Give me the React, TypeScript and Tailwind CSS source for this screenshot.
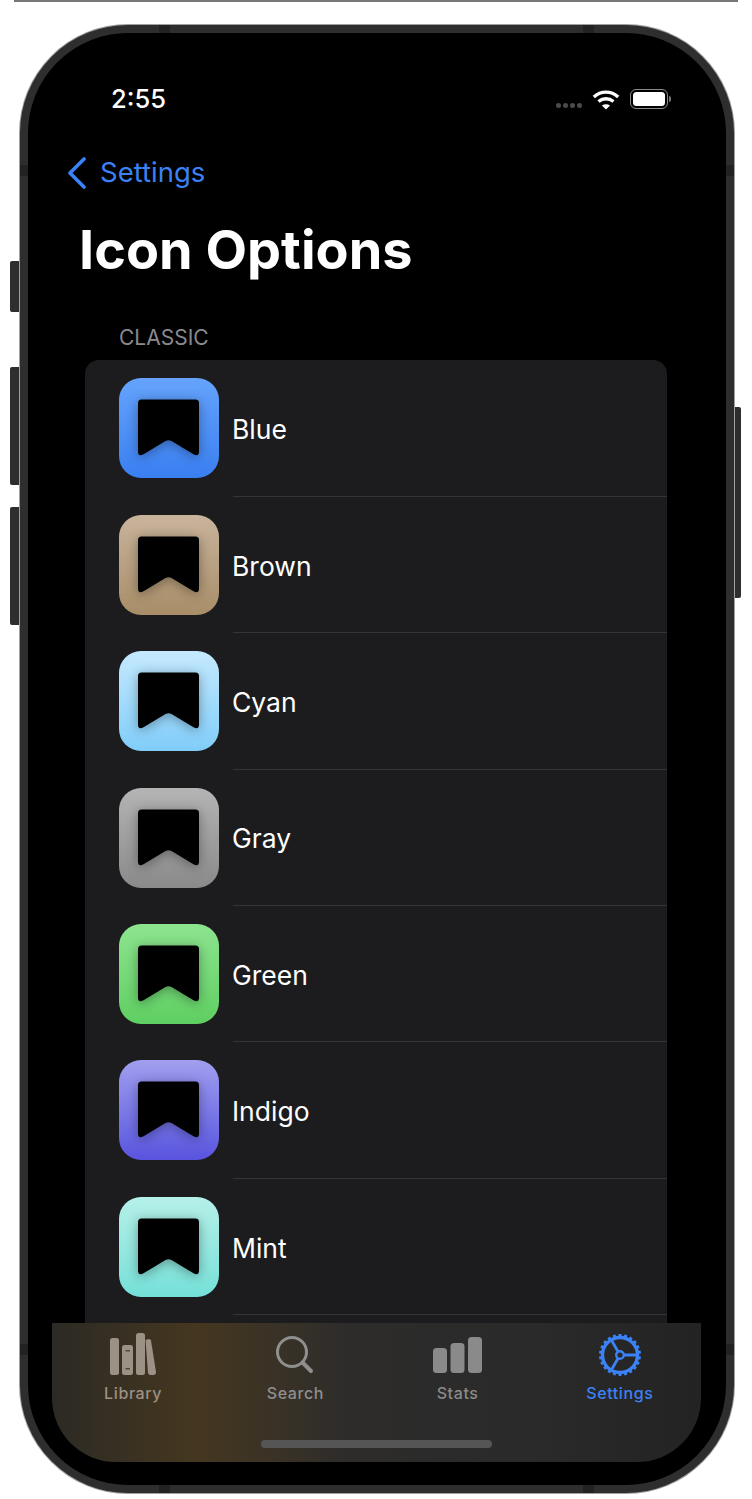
const icons = [
  { name: "Blue", gradient: "bg-gradient-to-b from-[#65a3fc] to-[#3a7ff1]" },
  { name: "Brown", gradient: "bg-gradient-to-b from-[#c9b49c] to-[#a88d68]" },
  { name: "Cyan", gradient: "bg-gradient-to-b from-[#c4e9fe] to-[#80cdf9]" },
  { name: "Gray", gradient: "bg-gradient-to-b from-[#b4b4b4] to-[#8a8a8a]" },
  { name: "Green", gradient: "bg-gradient-to-b from-[#8de48f] to-[#5fcf62]" },
  { name: "Indigo", gradient: "bg-gradient-to-b from-[#a29eef] to-[#5a53de]" },
  { name: "Mint", gradient: "bg-gradient-to-b from-[#b5f0e9] to-[#74e0d8]" },
];

const Bookmark = () => (
  <svg viewBox="0 0 100 100" className="w-[100px] h-[100px] drop-shadow-[0_2px_6px_rgba(0,0,0,0.35)]">
    <path
      d="M22.500 21.500 Q19 21.500 19 25 L19 73.500 Q19 79 24.500 76.300 L46.500 63 Q49.500 61.500 52.500 63 L74.500 76.300 Q80 79 80 73.500 L80 25 Q80 21.500 76.500 21.500 Z"
      fill="#000"
    />
  </svg>
);

const Wifi = () => (
  <svg viewBox="0 0 28 21" className="w-[28px] h-[21px]" fill="none" stroke="#fff" strokeWidth="3.4">
    <path d="M1.800 8 C9 1.500 19 1.500 26.200 8" />
    <path d="M6.500 12.500 C11 8.800 17 8.800 21.500 12.500" />
    <path d="M14 20.500 L9.900 16.500 C12.300 14.700 15.700 14.700 18.100 16.500 Z" fill="#fff" stroke="none" />
  </svg>
);

const Battery = () => (
  <div className="flex items-center">
    <div className="w-[38px] h-[20px] rounded-[6px] border border-[#8a8a8a] p-[2px]">
      <div className="w-full h-full bg-white rounded-[3.500px]" />
    </div>
    <div className="w-[2px] h-[6px] ml-[1.500px] bg-[#777] rounded-r-full" />
  </div>
);

const Books = () => (
  <svg viewBox="0 0 48 44" className="w-[48px] h-[44px] ml-[2px]">
    <rect x="0" y="5" width="9" height="37" rx="2.500" fill="#9b9184" />
    <rect x="12" y="12" width="11" height="30" rx="2.500" fill="#9b9184" />
    <rect x="15.500" y="17" width="4.500" height="1.500" fill="#4f4a40" />
    <rect x="15.500" y="35" width="4.500" height="1.500" fill="#4f4a40" />
    <rect x="26" y="0" width="9" height="42" rx="2.500" fill="#9b9184" />
    <path d="M35.500 7 L39 6 Q40.500 6 41 7.500 L46 39 Q46.300 41.500 44 42 L40.500 42 Q38.500 42 38 40 Z" fill="#9b9184" />
  </svg>
);

const Search = () => (
  <svg viewBox="0 0 44 44" className="w-[44px] h-[44px]" fill="none" stroke="#8f8f8f">
    <circle cx="19" cy="19" r="14.500" strokeWidth="3" />
    <path d="M29.500 29.500 L38 38" strokeWidth="4" strokeLinecap="round" />
  </svg>
);

const Stats = () => (
  <svg viewBox="0 0 49 36" className="w-[49px] h-[36px] mr-[1px]" fill="#8a8a8a">
    <rect x="0" y="11" width="14" height="25" rx="3.500" />
    <rect x="17.500" y="6" width="14" height="30" rx="3.500" />
    <rect x="35" y="0" width="14" height="36" rx="3.500" />
  </svg>
);

const Gear = () => (
  <svg viewBox="0 0 44 44" className="w-[44px] h-[44px] ml-[1px]" fill="none" stroke="#3b82f6">
    <circle cx="22" cy="22" r="17.500" strokeWidth="3.400" />
    <circle cx="22" cy="22" r="3.800" strokeWidth="2.400" />
    {[0, 120, 240].map((deg) => (
      <path key={deg} d="M25.800 22 L39 22" strokeWidth="2.800" transform={`rotate(${deg} 22 22)`} />
    ))}
    {Array.from({ length: 22 }).map((_, i) => (
      <path key={i} d="M22 1 L22 5" strokeWidth="3" transform={`rotate(${(i * 360) / 22} 22 22)`} />
    ))}
  </svg>
);

const tabs = [
  { label: "Library", icon: <Books />, color: "text-[#9b9184]" },
  { label: "Search", icon: <Search />, color: "text-[#8f8f8f]" },
  { label: "Stats", icon: <Stats />, color: "text-[#8a8a8a]" },
  { label: "Settings", icon: <Gear />, color: "text-[#3b82f6]" },
];

export default function App() {
  return (
    <div className="relative w-[752px] h-[1499px] bg-white overflow-hidden font-['Inter',sans-serif] pt-[25px] pl-[20px]">
      <div className="absolute top-0 left-[14px] w-[724px] h-[1.500px] bg-[#777]" />
      <div className="absolute left-[10px] top-[261px] w-[11px] h-[51px] rounded-l-[2px] bg-[#2e2e2e]" />
      <div className="absolute left-[10px] top-[367px] w-[11px] h-[118px] rounded-l-[2px] bg-[#2e2e2e]" />
      <div className="absolute left-[10px] top-[507px] w-[11px] h-[118px] rounded-l-[2px] bg-[#2e2e2e]" />
      <div className="absolute left-[733px] top-[407px] w-[8px] h-[191px] rounded-r-[2px] bg-[#2e2e2e]" />

      <div className="relative w-[714px] h-[1468px] rounded-[108px] border-[8px] border-[#2e2e2e] bg-black shadow-[0_0_0_1px_#a0a0a0] overflow-hidden flex flex-col">
        <div className="flex items-center justify-between h-[132px] pl-[83px] pr-[55px] shrink-0">
          <span className="text-[25.500px] leading-none font-medium text-white">2:55</span>
          <div className="flex items-center gap-[10px]">
            <div className="flex gap-[2px] mt-[13px]">
              <div className="w-[5px] h-[5px] rounded-full bg-[#4b4b4b]" />
              <div className="w-[5px] h-[5px] rounded-full bg-[#4b4b4b]" />
              <div className="w-[5px] h-[5px] rounded-full bg-[#4b4b4b]" />
              <div className="w-[5px] h-[5px] rounded-full bg-[#4b4b4b]" />
            </div>
            <Wifi />
            <Battery />
          </div>
        </div>

        <div className="flex items-center gap-[13px] pl-[39px] h-[40px] mt-[-12px] shrink-0">
          <svg viewBox="0 0 20 32" className="w-[20px] h-[32px]" fill="none" stroke="#3b82f6" strokeWidth="3.600" strokeLinecap="round" strokeLinejoin="round">
            <path d="M17 2 L3 16 L17 30" />
          </svg>
          <span className="text-[27.500px] leading-none text-[#3b82f6]">Settings</span>
        </div>

        <h1 className="pl-[51px] mt-[27px] text-[54px] leading-[60px] font-bold text-white shrink-0">Icon Options</h1>

        <div className="pl-[91px] mt-[45px] text-[21px] leading-[26px] text-[#8a8a8e] shrink-0">CLASSIC</div>

        <div className="flex-1 min-h-0 overflow-hidden ml-[57px] mr-[59px] mt-[9.400px] bg-[#1c1c1e] rounded-t-[14px]">
          {icons.map((item) => (
            <div key={item.name} className="flex items-center h-[136.400px] pl-[34px]">
              <div className={`w-[100px] h-[100px] rounded-[22px] shrink-0 -mt-[0.500px] ${item.gradient}`}>
                <Bookmark />
              </div>
              <div className="flex-1 self-stretch flex items-center ml-[14px] pt-[4px] border-b border-[#343436]">
                <span className="text-[26.500px] text-white -ml-[1px]">{item.name}</span>
              </div>
            </div>
          ))}
        </div>

        <div className="shrink-0 ml-[24px] mr-[25px] mb-[23px] h-[139px] rounded-b-[64px] grid grid-cols-4 pt-[7px] bg-[linear-gradient(to_right,#2c2a25_0%,#45371f_22%,#3c3325_32%,#2d2c2b_46%,#2a2a2a_75%,#232323_100%)] relative">
          {tabs.map((tab) => (
            <div key={tab.label} className="flex flex-col items-center">
              <div className="h-[50px] flex items-center justify-center">{tab.icon}</div>
              <span className={`text-[16px] leading-[22px] mt-[2px] font-medium tracking-[0.6px] ${tab.color}`}>{tab.label}</span>
            </div>
          ))}
          <div className="absolute left-[209px] bottom-[14px] w-[231px] h-[8px] rounded-full bg-[#555]" />
        </div>
      </div>

      <div className="absolute left-[159px] top-[25px] w-[11px] h-[8px] bg-[#222]" />
      <div className="absolute left-[583px] top-[25px] w-[11px] h-[8px] bg-[#222]" />
      <div className="absolute left-[159px] top-[1485px] w-[11px] h-[8px] bg-[#222]" />
      <div className="absolute left-[583px] top-[1485px] w-[11px] h-[8px] bg-[#222]" />
      <div className="absolute left-[20px] top-[165px] w-[8px] h-[11px] bg-[#222]" />
      <div className="absolute left-[726px] top-[165px] w-[8px] h-[11px] bg-[#222]" />
      <div className="absolute left-[20px] top-[1344px] w-[8px] h-[11px] bg-[#222]" />
      <div className="absolute left-[726px] top-[1344px] w-[8px] h-[11px] bg-[#222]" />
    </div>
  );
}
